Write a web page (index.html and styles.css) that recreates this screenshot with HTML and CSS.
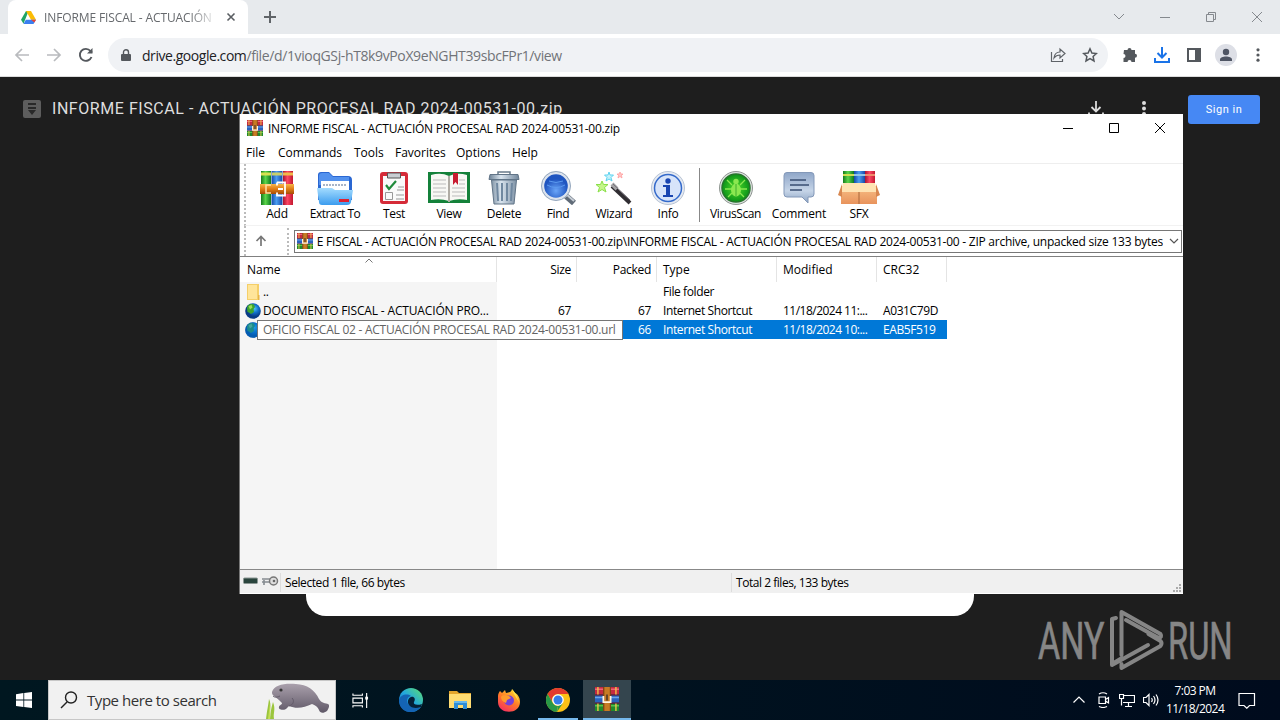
FILE: index.html
```
<!DOCTYPE html>
<html lang="en">
<head>
<meta charset="utf-8">
<title>INFORME FISCAL</title>
<link rel="stylesheet" href="styles.css">
</head>
<body>
<svg class="defs" width="0" height="0">
  <defs>
    <linearGradient id="gG" x2="1"><stop offset="0" stop-color="#147a1c"/><stop offset=".45" stop-color="#5bd44a"/><stop offset="1" stop-color="#0c7a1e"/></linearGradient>
    <linearGradient id="gB" x2="1"><stop offset="0" stop-color="#1548a8"/><stop offset=".45" stop-color="#4a9df0"/><stop offset="1" stop-color="#1748a8"/></linearGradient>
    <linearGradient id="gR" x2="1"><stop offset="0" stop-color="#a81430"/><stop offset=".45" stop-color="#fb4664"/><stop offset="1" stop-color="#c2182f"/></linearGradient>
    <linearGradient id="belt" x2="0" y2="1"><stop offset="0" stop-color="#f7b64a"/><stop offset=".5" stop-color="#e07c14"/><stop offset="1" stop-color="#a54c08"/></linearGradient>
    <linearGradient id="fold" x2="0" y2="1"><stop offset="0" stop-color="#a4dcff"/><stop offset="1" stop-color="#3c9cee"/></linearGradient>
    <linearGradient id="steel" x2="1"><stop offset="0" stop-color="#6d8296"/><stop offset=".4" stop-color="#d9e4ee"/><stop offset="1" stop-color="#71869b"/></linearGradient>
    <linearGradient id="note" x2="0" y2="1"><stop offset="0" stop-color="#8fa6c8"/><stop offset=".6" stop-color="#c6d5e8"/><stop offset="1" stop-color="#8ea5c4"/></linearGradient>
    <radialGradient id="lens" cy=".7"><stop offset="0" stop-color="#6aa5f8"/><stop offset="1" stop-color="#1f55c0"/></radialGradient>
    <radialGradient id="scan"><stop offset="0" stop-color="#4fdc2a"/><stop offset="1" stop-color="#0b9318"/></radialGradient>
    <radialGradient id="sea" cx=".6" cy=".35"><stop offset="0" stop-color="#4fc3f5"/><stop offset=".5" stop-color="#1272cc"/><stop offset="1" stop-color="#083b86"/></radialGradient>
    <linearGradient id="box" x2="0" y2="1"><stop offset="0" stop-color="#f8c087"/><stop offset="1" stop-color="#e8935c"/></linearGradient>
    <linearGradient id="manatee" x2="0" y2="1"><stop offset="0" stop-color="#aaa0ac"/><stop offset="1" stop-color="#5f5867"/></linearGradient>
    <linearGradient id="edge" x1="0" y1="1" x2="1" y2="0"><stop offset="0" stop-color="#0c5cb8"/><stop offset=".5" stop-color="#23a8de"/><stop offset="1" stop-color="#5ee06c"/></linearGradient>
    <linearGradient id="fire" x1=".8" x2=".2" y2="1"><stop offset="0" stop-color="#ffe22e"/><stop offset=".5" stop-color="#ff7a28"/><stop offset="1" stop-color="#f42a64"/></linearGradient>
    <symbol id="rar" viewBox="0 0 16 16">
      <path fill="#c42a40" d="M0 0h16v5H0z"/><path fill="#ef6478" d="M0 1h16v1H0z"/>
      <path fill="#2a62bd" d="M0 5.5h16v5H0z"/><path fill="#6ba4e8" d="M0 6.5h16v1H0z"/>
      <path fill="#1f8a2c" d="M0 11h16v5H0z"/><path fill="#5bbf4c" d="M0 12h16v1H0z"/>
      <path fill="#631b38" d="M0 5h16v.7H0zM0 10.4h16v.7H0z"/>
      <path fill="#c77b24" d="M5.5 0h5v16h-5z"/><path fill="#6e3410" d="M5.5 0h.7v16h-.7zM9.9 0h.6v16h-.6z"/>
      <path fill="#fff3df" d="M5 6h1.200v3.500h3.600V6H11v4.700H5z"/><path fill="#40302a" d="M7.500 5h1v4h-1z"/>
      <path fill="#f0c74c" d="M1.500 0h.9v5h-.9zm12 0h.9v5h-.9zm0 11h.9v5h-.9zm-12 0h.9v5h-.9z"/>
    </symbol>
    <symbol id="globe" viewBox="0 0 16 16">
      <circle cx="8" cy="8" r="7.8" fill="url(#sea)"/>
      <path fill="#3da52e" d="M3 2.500C5 .6 8 .6 9 1.500L10 4 8.500 6 9 9 6 11 4 9.500 2.500 9 2 5z"/>
      <path fill="#9ade55" d="M3.500 3.200l3-1.500 1 2.800-2.500 2z"/>
    </symbol>
  </defs>
</svg>

<div class="desktop">
  <header class="tabs">
    <div class="tab">
      <svg class="drive" viewBox="0 0 15 13"><path fill="#20a464" d="M5 0h2.600L2.500 12.800 0 8.700z"/><path fill="#fbbc05" d="M5 0h5l5 8.700h-5z"/><path fill="#3b7ff0" d="M4.800 8.700H15l-2.500 4.300h-10z"/><path fill="#ea4335" d="M10 8.700h5l-1.600 2.800z"/></svg>
      <span class="tab-title">INFORME FISCAL - ACTUACIÓN</span>
      <svg class="tab-x" viewBox="0 0 10 10"><path d="M1.500 1.500l7 7m0-7l-7 7" stroke="#5a5e62" stroke-width="1.600"/></svg>
    </div>
    <svg class="plus" viewBox="0 0 12 12"><path d="M6 0v12M0 6h12" stroke="#606468" stroke-width="2"/></svg>
    <div class="win-ctl">
      <svg viewBox="0 0 12 12"><path d="M1 3l5 5 5-5"/></svg>
      <svg viewBox="0 0 12 12"><path d="M1 6.500h10"/></svg>
      <svg viewBox="0 0 12 12"><path d="M1.500 3.500h7v7h-7zM3.500 3.500v-2h7v7h-2"/></svg>
      <svg viewBox="0 0 12 12"><path d="M1 1l10 10M11 1L1 11"/></svg>
    </div>
  </header>

  <nav class="toolbar">
    <svg class="nav-i dim" viewBox="0 0 16 16"><path d="M15 8H2M8 2L2 8l6 6"/></svg>
    <svg class="nav-i dim" viewBox="0 0 16 16"><path d="M1 8h13M8 2l6 6-6 6"/></svg>
    <svg class="nav-i" viewBox="0 0 16 16"><path d="M13.500 10A6 6 0 1 1 12.500 4l1.500 1.700"/><path d="M14.500 1v5.500H9z" fill="#54585d" stroke="none"/></svg>
    <div class="omnibox">
      <svg class="lock" viewBox="0 0 10 13"><path fill="#54585d" d="M1 5h8q1 0 1 1v5q0 1-1 1H1q-1 0-1-1V6q0-1 1-1z"/><path d="M2.500 5V3.200a2.500 2.500 0 0 1 5 0V5" fill="none" stroke="#54585d" stroke-width="1.400"/></svg>
      <span class="url"><b>drive.google.com</b><i>/file/d/1vioqGSj-hT8k9vPoX9eNGHT39sbcFPr1/view</i></span>
      <svg class="omni-i" viewBox="0 0 16 16"><path d="M1.500 5v9.500h11V12M4 11c.5-4 2.500-6 6-6V2l5 4.500-5 4.500V8C7.500 8 5.500 9 4 11z" fill="none" stroke="#5f6368" stroke-width="1.200"/></svg>
      <svg class="omni-i" viewBox="0 0 16 16"><path d="M8 1.800l1.900 4.200 4.500.5-3.300 3 .9 4.500L8 11.700 4 14l.9-4.500-3.300-3 4.500-.5z" fill="none" stroke="#54585d" stroke-width="1.500"/></svg>
    </div>
    <div class="ext">
      <svg viewBox="0 0 16 16"><path fill="#54585d" d="M2 3h3.500a2 2 0 1 1 4 0H13v3.700a2 2 0 1 1 0 4V15H9.500a2 2 0 0 0-4 0H1.500v-4a2 2 0 0 0 0-4z"/></svg>
      <svg viewBox="0 0 16 16"><path d="M8 0v10M3.500 6L8 10.500 12.500 6M1 11v4h14v-4" fill="none" stroke="#1a73e8" stroke-width="2"/></svg>
      <svg viewBox="0 0 16 16"><path fill="#54585d" fill-rule="evenodd" d="M1 1h14v14H1zM3 3v10h6V3z"/></svg>
      <svg class="ava" viewBox="0 0 22 22"><circle cx="11" cy="11" r="11" fill="#dddfe6"/><circle cx="11" cy="8" r="3.200" fill="#4f5564"/><path fill="#4f5564" d="M5 17v-1.500c0-4 12-4 12 0V17z"/></svg>
      <svg viewBox="0 0 16 16"><g fill="#54585d"><circle cx="8" cy="2.800" r="1.600"/><circle cx="8" cy="8" r="1.600"/><circle cx="8" cy="13.200" r="1.600"/></g></svg>
    </div>
  </nav>

  <main class="viewer">
    <div class="viewer-bar">
      <svg class="zip" viewBox="0 0 18 18"><rect width="18" height="18" rx="2" fill="#5d5d5d"/><path fill="#292929" d="M5 3h8v2H5zm0 4h8v2H5zm0 3h8l-4 5z"/></svg>
      <h1>INFORME FISCAL - ACTUACIÓN PROCESAL RAD 2024-00531-00.zip</h1>
      <svg class="v-i" viewBox="0 0 16 16"><path d="M8 0v10M3.500 6L8 10.500 12.500 6M1 11.500v3h14v-3" fill="none" stroke="#dcdcdc" stroke-width="1.800"/></svg>
      <svg class="v-i more" viewBox="0 0 16 16"><g fill="#dcdcdc"><circle cx="8" cy="2" r="2"/><circle cx="8" cy="7.500" r="2"/><circle cx="8" cy="13" r="2"/></g></svg>
      <span class="signin">Sign in</span>
    </div>
    <div class="card"></div>
  </main>

  <footer class="taskbar">
    <div class="start"><svg viewBox="0 0 16 16"><path fill="#fff" d="M0 2.200L7.400 1v6.600H0zM8.200.9L16 0v7.600H8.200zM0 8.400h7.400V15L0 13.900zM8.200 8.400H16V16l-7.800-1.100z"/></svg></div>
    <div class="search">
      <svg class="mag" viewBox="0 0 18 18"><path d="M7 11l-6 6" stroke="#222" stroke-width="1.500"/><circle cx="11" cy="6.500" r="5.500" fill="none" stroke="#222" stroke-width="1.400"/></svg>
      <span>Type here to search</span>
      <svg class="seal" viewBox="0 0 66 38"><path fill="url(#manatee)" d="M7 11C9 4 19 2 31 3c11 .5 19 6 23 15 2 3 4 4 9 5 2 1 1 4-1 7-4 3-7 2-8-1-1-3-4-5-7-6-8 4-16 5-23 2l-3 3c-4 2-8 0-7-2 0-2 3-2 3-4-3-3-4-4-8-7-2-1-2-3-2-4z"/><circle cx="16" cy="9" r="1.600" fill="#333"/><path d="M8 15c2 2 5 1 7 0M24 25c4-1 6-5 3-8" stroke="#625a69" fill="none"/><path fill="#9bc53d" d="M1 38c1-9 2-12 3-20 3 6 0 11 2 20zm5 0c-1-8 1-13 2-17 3 8 0 10 1 17z"/><path fill="#c6df55" d="M3 38l2-16v16z"/></svg>
    </div>
    <div class="task first"><svg class="tv" viewBox="0 0 18 18"><path d="M1 1.500v2h10v-2M1 16.500v-2h10v2M1 6.500h10v5H1zM15.500 1v16" fill="none" stroke="#fff" stroke-width="1.200"/><path fill="#fff" d="M14 5h3v3h-3z"/></svg></div>
    <div class="task"><svg viewBox="0 0 24 24"><circle cx="12" cy="12" r="12" fill="url(#edge)"/><path fill="#1464b4" d="M0 12C1 7 8 5 12 8c-4 1-5 5-3 8s8 5 13 3C15 28 0 25 0 12z"/><path fill="#052038" d="M12 9c3-1 5 2 3 5-1 2 2 4 8 2l-1 3c-5 2-10 1-12-2-2-3-1-7 2-8z"/></svg></div>
    <div class="task"><svg viewBox="0 0 24 24"><path fill="#e3a52c" d="M1 3h8l2 2h12v5H1z"/><path fill="#ffdc72" d="M1 6h22v14H1z"/><path fill="#2f8dd7" d="M6 13h13v8h-4v-4h-5v4H6z"/><path fill="#68b8ed" d="M6 13h13v2H6z"/></svg></div>
    <div class="task"><svg viewBox="0 0 24 24"><path fill="url(#fire)" d="M1 8c0-2 1-4 2-5l2 2 3-3 1 3c3-1 5 0 6-4l3 4c4 2 5 6 5 9 0 13-22 13-22 0z"/><circle cx="12" cy="12.500" r="5" fill="#7540d8"/><path fill="#ff9b2d" d="M4 9c2-3 6-1 8-1l2 2-4 2-1 3C6 14 4 12 4 9z"/><path fill="#ffe34a" d="M15 1l4 5 3 8-5-8z"/></svg></div>
    <div class="task open"><svg viewBox="0 0 24 24"><circle cx="12" cy="12" r="12" fill="#fbc116"/><path fill="#e33b2e" d="M1.600 6A12 12 0 0 1 22.400 6H12a6 6 0 0 0-5.200 9z"/><path fill="#279847" d="M1.600 6l5.200 9A6 6 0 0 0 12 18l-1.500 6A12 12 0 0 1 1.600 6z"/><path fill="#279847" d="M11 24l6-9-5 3z"/><circle cx="12" cy="12" r="5.800" fill="#fff"/><circle cx="12" cy="12" r="4.500" fill="#347de8"/></svg></div>
    <div class="task active"><svg viewBox="0 0 16 16"><use href="#rar"/></svg></div>
    <div class="tray">
      <svg viewBox="0 0 16 16"><path d="M2.500 10.500L8 5l5.500 5.500"/></svg>
      <svg viewBox="0 0 16 16"><path d="M4 5h6.500v6.500H4zM10.500 7.500l3-2v5.500l-3-2M4 2q4-2.500 8 0M4 14.500q4 2 8 0"/></svg>
      <svg viewBox="0 0 16 16"><path d="M5 3.500h10.500v7H4M9.500 10.500V14M6 14.500h7M.5 2.500h4v4h-4zM2.500 6.500v7"/></svg>
      <svg viewBox="0 0 16 16"><path d="M.5 5.500h2.500l3-3v11l-3-3H.5zM8.500 6q1.500 2 0 4M10.500 4q3 4 0 8M13 2.500q4 5.500 0 11"/></svg>
      <div class="clock"><div>7:03 PM</div><div>11/18/2024</div></div>
      <svg class="bell" viewBox="0 0 18 18"><path d="M1 2.500h15.500v12h-5l-2.700 2.700L6 14.500H1z"/></svg>
    </div>
  </footer>
</div>

<svg class="watermark" viewBox="0 0 210 72">
  <g fill="#868686" stroke="#868686" stroke-width=".7" font-family="Roboto, sans-serif" font-size="51.500"><text transform="translate(0 50) scale(.66 1)">ANY</text><text transform="translate(130 50) scale(.635 1)">RUN</text></g>
  <g fill="none" stroke="#858585" stroke-width="4" stroke-linejoin="round" stroke-linecap="round"><path d="M83.500 46V3l39 22q2 3-2 4L88 11"/><path d="M78 9l-4 1v46l36-20M83.500 55v4l39-22q2-3 0-5l-12-7M74 55l10-6"/></g>
</svg>

<section class="winrar">
  <div class="titlebar">
    <svg class="ico" viewBox="0 0 16 16"><use href="#rar"/></svg>
    <span class="title">INFORME FISCAL - ACTUACIÓN PROCESAL RAD 2024-00531-00.zip</span>
    <div class="wr-ctl"><svg viewBox="0 0 12 12"><path d="M1 6.500h10"/></svg><svg viewBox="0 0 12 12"><path d="M1.500 1.500h9v9h-9z"/></svg><svg viewBox="0 0 12 12"><path d="M1 1l10 10M11 1L1 11"/></svg></div>
  </div>
  <div class="menu"><span class="m1">File</span><span class="m2">Commands</span><span class="m3">Tools</span><span class="m4">Favorites</span><span class="m5">Options</span><span>Help</span></div>
  <div class="tools">
    <div class="tool"><svg viewBox="0 0 34 34"><path fill="url(#gG)" d="M1 0h10v34H1z"/><path fill="url(#gB)" d="M11.500 0h11v34h-11z"/><path fill="url(#gR)" d="M23 0h10v34H23z"/><path fill="#d8e050" d="M1 1.500h10v3H1z"/><path fill="#c9cf6a" d="M12 1.500h10v3H12z"/><path fill="#f0b84a" d="M23 1.500h10v3H23z"/><path fill="url(#belt)" d="M0 13h34v10H0z"/><path fill="none" stroke="#ffe0a0" stroke-width="1.500" d="M11 14H6v8h5"/><path fill="none" stroke="#fff" stroke-width="1.800" d="M17 11.500h8v13h-8v-3M18 18h5M17 14.500v-3"/></svg><span>Add</span></div>
    <div class="tool wide"><svg class="w38" viewBox="0 0 38 34"><path fill="#2a67d2" d="M2 4q0-3 3-3h8l4 4h15q4 0 4 4v20H2z"/><path fill="#5291ee" d="M3 5q0-3 3-3h7l4 4h16v8H3z"/><path fill="#fff" d="M5 10h28v12H5z"/><path d="M7 14h24" stroke="#a8b4c7" stroke-width="2" stroke-dasharray="2 1"/><path fill="url(#fold)" d="M1 17h15l3 2h18l-2 12q-.5 3-4 3H6q-3 0-3-3z"/><path fill="#df2030" d="M23 28h10v3H23z"/></svg><span>Extract To</span></div>
    <div class="tool t56"><svg viewBox="0 0 34 34"><rect x="3" y="1" width="28" height="32" rx="3" fill="#d52b38"/><path fill="#fafafa" d="M6 5h22v25H6z"/><path fill="#c9cdd2" stroke="#555" d="M10.500 2h13v5h-13z"/><path d="M9 14l3 4 7-8" stroke="#218b3c" stroke-width="2.200" fill="none"/><path d="M21 16h6M20 19h7M19 24h8M19 28h8M8.500 21.500h7v7h-7z" stroke="#999" fill="none"/></svg><span>Test</span></div>
    <div class="tool t54"><svg class="w42" viewBox="0 0 42 34"><path fill="#14813a" d="M0 1h42v31H0z"/><path fill="#f8f8f4" d="M3 4q10-3 18 1 8-4 18-1v25q-9-2-18 1-9-3-18-1z"/><path d="M21 5v26" stroke="#b0aca4" stroke-width="2"/><path d="M5 9h13M5 13h13M5 17h13M5 21h13M5 25h13M24 17h13M24 21h13M24 25h13M31 9h6M31 13h6" stroke="#bbb"/><path fill="#c81c30" d="M25 2h5v12l-2.500-3-2.500 3z"/></svg><span>View</span></div>
    <div class="tool t56"><svg viewBox="0 0 34 34"><path d="M11 3.500V1h12v2.500" stroke="#697b8b" stroke-width="1.500" fill="none"/><path fill="url(#steel)" stroke="#617487" d="M3 3.500h28l1 5H2zM4.500 9h25L27 33H7z"/><path d="M10 12l1 18M15 12v18M20 12v18M25 12l-1 18" stroke="#7088a0" stroke-width="2"/></svg><span>Delete</span></div>
    <div class="tool t52"><svg class="w38" viewBox="0 0 38 34"><path d="M27 25l8 7" stroke="#606b78" stroke-width="6"/><path d="M27 23l8 7" stroke="#c7ced6" stroke-width="2"/><circle cx="17" cy="15" r="15" fill="#dde4ee"/><circle cx="17" cy="15" r="14.500" fill="none" stroke="#96a8bd"/><circle cx="17" cy="15" r="11.800" fill="url(#lens)"/><path d="M8 14q9 5 18 0M10 10q7 3 14 0" fill="none" stroke="#5c9af0"/></svg><span>Find</span></div>
    <div class="tool t60"><svg class="w38" viewBox="0 0 38 34"><path d="M17 15l18 17" stroke="#302d32" stroke-width="4"/><path d="M17 13l5 5" stroke="#a2a2a5" stroke-width="4"/><path d="M18 13l17 16" stroke="#77737b"/><path fill="#c4f58a" stroke="#8be04a" d="M7 10l1.500 3.500 4.500 0-3.500 3 1.500 4.500-4-2.500-4 2.500 1.500-4.500-3.500-3h4.500z"/><path fill="#c4f2fb" stroke="#5fd3f0" d="M14 1l1 3 3.500 0-2.500 2.500 1 3.500-3-2-3 2 1-3.500L9.500 4H13z"/><path fill="#ffc4c4" stroke="#ff9696" stroke-width=".7" d="M25 1l1 2h2l-1.500 1.500.5 2.500-2-1.500-2 1.500.5-2.500L22 3h2z"/></svg><span>Wizard</span></div>
    <div class="tool t48"><svg viewBox="0 0 34 34"><circle cx="17" cy="17" r="16.500" fill="#e5eaf2" stroke="#b7c3d4"/><circle cx="17" cy="17" r="13.500" fill="#d7e4fa" stroke="#346acb" stroke-width="1.500"/><circle cx="17" cy="10" r="2.700" fill="#1945b0"/><path fill="#1945b0" d="M12 14h7v10h3v2H12v-2h3v-8h-3z"/></svg><span>Info</span></div>
    <div class="sep"></div>
    <div class="tool t58 virus"><svg viewBox="0 0 34 34"><circle cx="17" cy="17" r="16.500" fill="#dce0df" stroke="#8e9590"/><circle cx="17" cy="17" r="14" fill="url(#scan)" stroke="#26752b" stroke-width="1.500"/><ellipse cx="17" cy="19" rx="5" ry="6.500" fill="#8be850"/><circle cx="17" cy="10.500" r="2.700" fill="#8be850"/><path d="M8 9l5 5M26 9l-5 5M6 18h7M28 18h-7M9 26l4-4M25 26l-4-4" stroke="#8be850" stroke-width="1.300"/><path d="M17 13v12" stroke="#3fae2c"/></svg><span>VirusScan</span></div>
    <div class="tool t70"><svg viewBox="0 0 34 34"><path fill="url(#note)" stroke="#8398b8" d="M5 1.500h24q3 0 3 3V23q0 3-3 3h-3v6l-6-6H5q-3 0-3-3V4.500q0-3 3-3z"/><path d="M8 9h16M8 14h19M8 19h12" stroke="#394e72" stroke-width="1.700"/></svg><span>Comment</span></div>
    <div class="tool t50"><svg class="w42" viewBox="0 0 42 34"><path fill="url(#gG)" d="M5 0h11v15H5z"/><path fill="url(#gB)" d="M16 0h11v15H16z"/><path fill="url(#gR)" d="M27 0h10v15H27z"/><path fill="#d4dc50" d="M5 3h11v2H5z"/><path fill="#8fc6e8" d="M16 3h11v2H16z"/><path fill="#f08a6a" d="M27 3h10v2H27z"/><path fill="url(#box)" d="M3 15h36v18H3z"/><path fill="#ffe3b3" d="M5 12h32l2 9H3z"/><path fill="#d88750" d="M4 13L0 24l4 2zM38 13l4 11-4 2z"/><path d="M21 21v12" stroke="#a9663b"/></svg><span>SFX</span></div>
  </div>
  <div class="addr">
    <svg class="up" viewBox="0 0 12 12"><path d="M6 11V1.500M1.500 6L6 1.500 10.500 6" fill="none" stroke="#777" stroke-width="1.700"/></svg>
    <div class="combo">
      <svg class="ico" viewBox="0 0 16 16"><use href="#rar"/></svg>
      <div class="path"><span>E FISCAL - ACTUACIÓN PROCESAL RAD 2024-00531-00.zip\INFORME FISCAL - ACTUACIÓN PROCESAL RAD 2024-00531-00 - ZIP archive, unpacked size 133 bytes</span></div>
      <svg class="chev" viewBox="0 0 10 10"><path d="M1 3l4 4 4-4" fill="none" stroke="#555" stroke-width="1.200"/></svg>
    </div>
  </div>
  <div class="list">
    <div class="row head"><span>Name<svg class="sort" viewBox="0 0 8 5"><path d="M.5 4.500L4 1l3.500 3.500" fill="none" stroke="#777"/></svg></span><span class="r">Size</span><span class="r">Packed</span><span>Type</span><span>Modified</span><span>CRC32</span></div>
    <div class="row"><span class="n"><svg viewBox="0 0 16 16"><path fill="#f5cf69" d="M2 0h12v16H2z"/><path fill="#ffe59a" d="M3 1h9v14H3z"/><path fill="#e7b546" d="M13 11h1.500v5H13z"/></svg>..</span><span></span><span></span><span>File folder</span><span></span><span></span></div>
    <div class="row"><span class="n"><svg viewBox="0 0 16 16"><use href="#globe"/></svg><em>DOCUMENTO FISCAL - ACTUACIÓN PRO...</em></span><span class="r">67</span><span class="r">67</span><span>Internet Shortcut</span><span class="date">11/18/2024 11:...</span><span>A031C79D</span></div>
    <div class="row sel"><span class="n"><svg viewBox="0 0 16 16"><use href="#globe"/><circle cx="8" cy="8" r="7.800" fill="#0078d7" opacity=".55"/></svg></span><span class="r"></span><span class="r">66</span><span>Internet Shortcut</span><span class="date">11/18/2024 10:...</span><span>EAB5F519</span><div class="tip">OFICIO FISCAL 02 - ACTUACIÓN PROCESAL RAD 2024-00531-00.url</div></div>
    <div class="blank"></div>
  </div>
  <div class="status">
    <svg viewBox="0 0 36 12"><rect x=".5" y="3" width="14" height="5.500" rx="1" fill="#29443c" stroke="#8b9693"/><path d="M19 4h9M19 7h9M21 5v5" stroke="#858b90" stroke-width="1.600"/><circle cx="30.500" cy="6" r="4" fill="#ddd" stroke="#777" stroke-width="1.500"/><circle cx="31" cy="6" r="1.300" fill="#666"/></svg>
    <span class="s1">Selected 1 file, 66 bytes</span><span class="s2">Total 2 files, 133 bytes</span>
    <svg class="grip" viewBox="0 0 9 9"><path fill="#aaa" d="M6 0h2v2H6zM3 3h2v2H3zm3 0h2v2H6zM0 6h2v2H0zm3 0h2v2H3zm3 0h2v2H6z"/></svg>
  </div>
</section>
</body>
</html>
```
FILE: styles.css
```
* { box-sizing: border-box; }
body { margin: 0; width: 1280px; height: 720px; overflow: hidden; position: relative; font-family: "Open Sans", "Noto Sans", sans-serif; font-size: 12px; color: #000; }
svg { display: block; flex: none; }
.defs { position: absolute; }
.desktop { height: 720px; display: flex; flex-direction: column; background: #1e1e1e; }

.tabs { height: 34px; background: #e7eaed; display: flex; align-items: center; padding-left: 8px; }
.tab { width: 240px; height: 34px; background: #fff; border-radius: 8px 8px 0 0; display: flex; align-items: center; padding-left: 13px; }
.drive { width: 15px; height: 13px; }
.tab-title { width: 171px; margin-left: 8px; overflow: hidden; white-space: nowrap; color: #66696d; letter-spacing: -.12px; -webkit-mask-image: linear-gradient(90deg, #000 145px, transparent 174px); mask-image: linear-gradient(90deg, #000 145px, transparent 174px); }
.tab-x { width: 10px; height: 10px; margin-left: 11px; }
.plus { width: 12px; height: 12px; margin-left: 16px; }
.win-ctl { margin-left: auto; margin-right: 17px; display: flex; gap: 34px; }
.win-ctl svg { width: 12px; height: 12px; fill: none; stroke: #85898e; }

.toolbar { height: 43px; background: #fff; border-bottom: 1px solid #dcdcdc; display: flex; align-items: center; padding-left: 14px; }
.nav-i { width: 16px; height: 16px; margin-right: 16px; fill: none; stroke: #54585d; stroke-width: 1.900; }
.dim { stroke: #b9bbbe; stroke-width: 1.700; }
.omnibox { width: 1000px; height: 34px; margin-left: -2px; border-radius: 17px; background: #f0f2f5; display: flex; align-items: center; padding: 0 10px 0 13px; }
.lock { width: 10px; height: 13px; }
.url { margin-left: 11px; margin-right: auto; font-size: 14px; }
.url b { font-weight: 400; color: #202124; letter-spacing: -.45px; }
.url i { font-style: normal; color: #707378; letter-spacing: -.38px; }
.omni-i { width: 16px; height: 16px; margin-left: 16px; }
.ext { display: flex; align-items: center; margin-left: 14px; gap: 16px; }
.ext svg { width: 16px; height: 16px; }
.ext .ava { width: 22px; height: 22px; margin: 0 -3px; }

.viewer { flex: 1; display: flex; flex-direction: column; justify-content: space-between; align-items: center; padding-bottom: 64px; }
.viewer-bar { width: 1280px; height: 64px; display: flex; align-items: center; padding: 0 20px 0 23px; }
.zip { width: 18px; height: 18px; }
.viewer-bar h1 { margin: 0 auto 2px 11px; font: 400 16px Roboto, sans-serif; color: #dedede; letter-spacing: .55px; white-space: nowrap; }
.v-i { width: 16px; height: 16px; }
.more { margin-left: 32px; }
.signin { width: 72px; height: 29px; margin-left: 36px; border-radius: 3px; background: #4688f4; color: #fff; font: 400 11px/29px Roboto, sans-serif; letter-spacing: .5px; text-align: center; }
.card { width: 668px; height: 80px; border-radius: 0 0 20px 20px; background: #fff; }

.taskbar { height: 40px; display: flex; background: linear-gradient(90deg, #001720, #00121f 50%, #000b1d); }
.start { width: 48px; display: grid; place-items: center; }
.start svg { width: 16px; height: 16px; }
.search { width: 288px; height: 40px; background: #f1f1f1; border: 1px solid #c7c7c7; display: flex; align-items: center; padding-left: 11px; }
.mag { width: 18px; height: 18px; }
.search span { margin-left: 9px; color: #333; font-size: 15px; letter-spacing: -.45px; white-space: nowrap; }
.seal { width: 66px; height: 38px; margin-left: auto; margin-right: 4px; }
.task { width: 49px; height: 40px; display: grid; place-items: center; }
.task svg { width: 24px; height: 24px; }
.task .tv { width: 17px; height: 17px; }
.open { background: linear-gradient(#76b9ed, #76b9ed) center bottom / 40px 2px no-repeat; }
.active { background: #34454e; border-bottom: 2px solid #76b9ed; width: 48px; margin-left: 1px; }
.first { width: 50px; padding-right: 2px; }
.tray { margin-left: auto; display: flex; align-items: center; gap: 8px; padding-right: 24px; }
.tray svg { width: 16px; height: 16px; fill: none; stroke: #fff; stroke-width: 1.200; }
.tray .bell { width: 18px; height: 18px; margin-left: 6px; }
.clock { width: 58px; color: #fff; line-height: 18px; text-align: center; white-space: nowrap; letter-spacing: -.55px; margin-left: -1px; }

.watermark { position: absolute; left: 1038px; top: 609px; width: 210px; height: 72px; }

.winrar { position: absolute; left: 239px; top: 114px; width: 944px; height: 480px; background: #fff; border-left: 1px solid #777; display: flex; flex-direction: column; line-height: 18px; white-space: nowrap; letter-spacing: -.25px; }
.titlebar { height: 28px; display: flex; align-items: center; padding-left: 7px; }
.ico { width: 16px; height: 16px; }
.title { margin-left: 5px; letter-spacing: -.23px; padding-top: 1px; }
.wr-ctl { margin-left: auto; margin-right: 17px; display: flex; gap: 34px; }
.wr-ctl svg { width: 12px; height: 12px; fill: none; stroke: #000; }
.menu { height: 22px; display: flex; align-items: center; padding: 1px 0 0 6px; border-bottom: 1px solid #eee; letter-spacing: 0; }
.m1 { width: 32px; } .m2 { width: 76px; } .m3 { width: 41px; } .m4 { width: 61px; } .m5 { width: 56px; }
.tools { height: 62px; display: flex; margin-left: 4px; padding-left: 4px; border-left: 2px dotted #bbb; border-bottom: 1px solid #f2f2f2; }
.tool { width: 54px; flex: none; display: flex; flex-direction: column; align-items: center; padding-top: 7px; letter-spacing: -.3px; }
.tool svg { width: 34px; height: 34px; }
.tool .w38 { width: 38px; } .tool .w42 { width: 42px; }
.wide { width: 62px; letter-spacing: -.55px; } .t56 { width: 56px; } .t54 { width: 54px; } .t52 { width: 52px; } .t60 { width: 60px; } .t48 { width: 48px; } .t58 { width: 58px; } .t70 { width: 70px; letter-spacing: -.15px; } .t50 { width: 50px; }
.virus { letter-spacing: -.4px; padding-left: 1px; }
.sep { width: 1px; height: 54px; margin: 4px 6px 0 7px; background: #888; flex: none; }
.addr { height: 30px; display: flex; align-items: center; margin-left: 4px; border-left: 2px dotted #bbb; }
.up { width: 12px; height: 12px; margin-left: 9px; }
.combo { flex: 1; height: 23px; margin-left: 27px; margin-right: 1px; border: 1px solid #777; display: flex; align-items: center; padding-left: 2px; position: relative; }
.combo::before { content: ""; position: absolute; left: -8px; top: -3px; height: 27px; border-left: 2px dotted #bbb; }
.path { width: 846px; margin-left: 4px; overflow: hidden; display: flex; justify-content: flex-end; padding-top: 1px; }
.path span { flex: none; }
.chev { width: 10px; height: 10px; margin-left: 6px; }
.list { flex: 1; border-top: 1px solid #808080; display: flex; flex-direction: column; border-bottom: 1px solid #888; }
.row { width: 707px; height: 19px; display: grid; grid-template-columns: 257px 80px 80px 120px 100px 70px; position: relative; line-height: 19px; letter-spacing: -.4px; }
.row > span { padding: 0 6px; }
.row > .r { text-align: right; }
.row > .n { display: flex; align-items: center; padding: 0 5px; background: #f5f5f5; }
.n svg { width: 16px; height: 16px; margin-right: 2px; }
.n em { font-style: normal; letter-spacing: -.16px; }
.row .date { letter-spacing: -.52px; }
.head { height: 25px; line-height: 25px; letter-spacing: 0; }
.head > span { border-right: 1px solid #e4e4e4; }
.head > .r { letter-spacing: -.3px; padding-right: 5px; }
.head > span:first-child { padding-left: 7px; position: relative; }
.sort { position: absolute; width: 8px; height: 5px; left: 125px; top: 1px; }
.sel { background: #0078d7; color: #fff; }
.tip { position: absolute; left: 17px; top: 0; width: 366px; height: 20px; padding-left: 5px; line-height: 18px; border: 1px solid #767676; background: #fff; color: #636363; letter-spacing: -.25px; }
.blank { width: 257px; flex: 1; background: #f5f5f5; }
.status { height: 24px; background: #f0f0f0; border-bottom: 1px solid #fff; display: flex; align-items: center; padding: 2px 0 0 3px; letter-spacing: -.42px; }
.status > svg:first-child { width: 36px; height: 12px; margin-bottom: 3px; }
.s1 { width: 452px; margin-left: 1px; padding: 1px 0 0 4px; border-left: 1px solid #ddd; border-right: 1px solid #ddd; }
.s2 { padding: 1px 0 0 4px; letter-spacing: -.46px; }
.status .grip { width: 9px; height: 9px; margin-left: auto; align-self: flex-end; margin-right: 1px; }
```
